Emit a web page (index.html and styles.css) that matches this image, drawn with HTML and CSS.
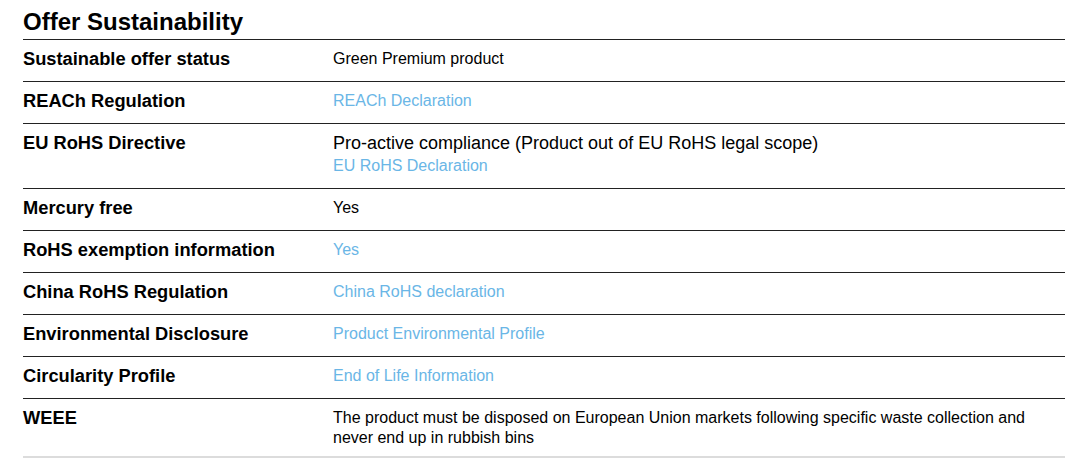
FILE: index.html
```html
<!DOCTYPE html>
<html lang="en">
<head>
  <meta charset="UTF-8">
  <meta name="viewport" content="width=device-width, initial-scale=1.0">
  <title>Offer Sustainability</title>
  <link rel="stylesheet" href="styles.css">
</head>
<body>
  <div class="sheet">
    <h2 class="sheet-title">Offer Sustainability</h2>

    <div class="spec-list">
      <div class="spec-row">
        <div class="spec-label">Sustainable offer status</div>
        <div class="spec-value">Green Premium product</div>
      </div>
      <div class="spec-row">
        <div class="spec-label">REACh Regulation</div>
        <div class="spec-value"><a href="#">REACh Declaration</a></div>
      </div>
      <div class="spec-row">
        <div class="spec-label">EU RoHS Directive</div>
        <div class="spec-value">
          <span class="big">Pro-active compliance (Product out of EU RoHS legal scope)</span>
          <a href="#" class="sub-link">EU RoHS Declaration</a>
        </div>
      </div>
      <div class="spec-row">
        <div class="spec-label">Mercury free</div>
        <div class="spec-value">Yes</div>
      </div>
      <div class="spec-row">
        <div class="spec-label">RoHS exemption information</div>
        <div class="spec-value"><a href="#">Yes</a></div>
      </div>
      <div class="spec-row">
        <div class="spec-label">China RoHS Regulation</div>
        <div class="spec-value"><a href="#">China RoHS declaration</a></div>
      </div>
      <div class="spec-row">
        <div class="spec-label">Environmental Disclosure</div>
        <div class="spec-value"><a href="#">Product Environmental Profile</a></div>
      </div>
      <div class="spec-row">
        <div class="spec-label">Circularity Profile</div>
        <div class="spec-value"><a href="#">End of Life Information</a></div>
      </div>
      <div class="spec-row last">
        <div class="spec-label">WEEE</div>
        <div class="spec-value small">The product must be disposed on European Union markets following specific waste collection and never end up in rubbish bins</div>
      </div>
    </div>
  </div>
</body>
</html>
```

FILE: styles.css
```css
body {
  margin: 0;
  padding: 0;
  background-color: #fff;
  color: #000;
  font-family: "Liberation Sans", Arial, sans-serif;
}
.sheet {
  padding: 8px 15px 0 23px;
}
.sheet-title {
  margin: 0 0 3px 0;
  font-size: 24px;
  line-height: 28px;
  font-weight: bold;
}
.spec-list {
  border-bottom: 2px solid #dcdcdc;
}
.spec-row {
  display: grid;
  grid-template-columns: 310px 1fr;
  border-top: 1px solid #222;
  padding: 9px 0 12px;
}
.spec-row.last {
  padding-bottom: 9px;
}
.spec-label {
  font-size: 18.3px;
  line-height: 20px;
  font-weight: bold;
}
.spec-value {
  font-size: 16px;
  line-height: 20px;
}
.spec-value a {
  color: #6ab6e6;
  text-decoration: none;
}
.spec-value .big {
  display: block;
  font-size: 18px;
}
.spec-value .sub-link {
  display: block;
  margin-top: 3px;
}
.spec-value.small {
  font-size: 16px;
  line-height: 19.5px;
  padding-right: 30px;
}
```
